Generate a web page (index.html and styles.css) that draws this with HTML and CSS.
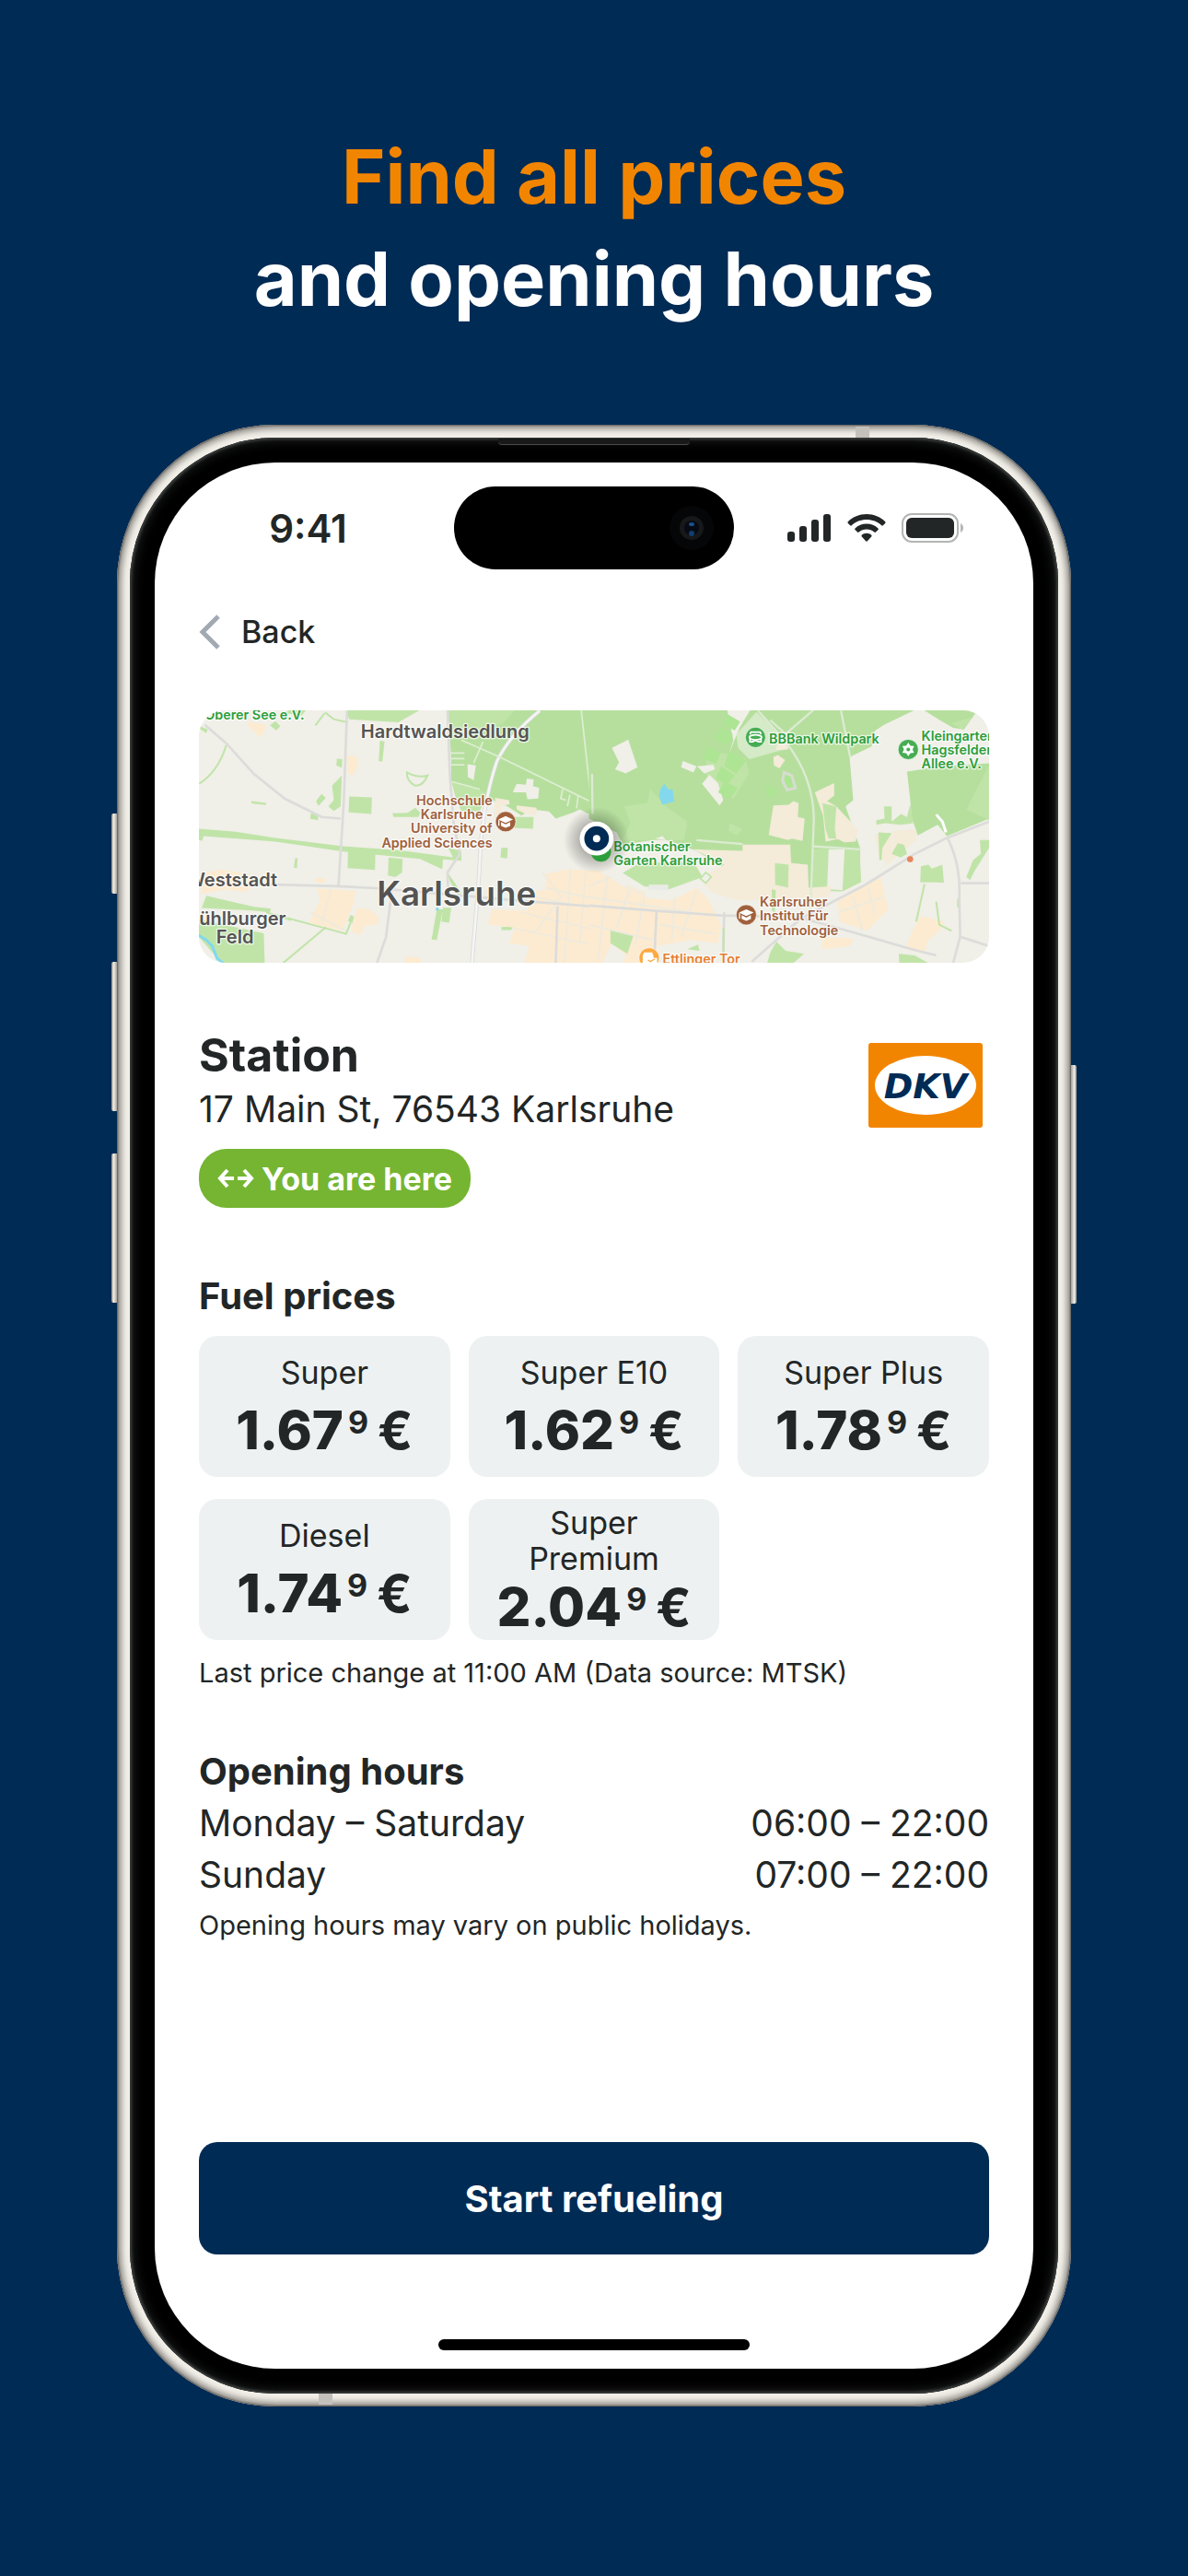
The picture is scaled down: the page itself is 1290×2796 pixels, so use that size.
FILE: index.html
```html
<!DOCTYPE html>
<html lang="en">
<head>
<meta charset="UTF-8">
<meta name="viewport" content="width=device-width, initial-scale=1.0">
<title>Find all prices and opening hours</title>
<link rel="stylesheet" href="styles.css">
</head>
<body>

<h1 class="headline">
    <span class="headline-accent">Find all prices</span>
    <span>and opening hours</span>
</h1>

<div class="phone">
    <span class="side-button action"></span>
    <span class="side-button volume-up"></span>
    <span class="side-button volume-down"></span>
    <span class="side-button power"></span>
    <span class="antenna antenna-top"></span>
    <span class="antenna antenna-bottom"></span>

    <div class="bezel">
        <span class="speaker"></span>
        <div class="screen">

            <header class="status-bar">
                <span class="time">9:41</span>
                <div class="island">
                    <svg class="camera" viewBox="0 0 48 48">
                        <circle cx="24" cy="24" r="24" fill="#050607"/>
                        <circle cx="24" cy="24" r="13" fill="#17181a"/>
                        <circle cx="24" cy="24" r="8" fill="#060a12"/>
                        <ellipse cx="24" cy="20" rx="3" ry="2" fill="#1d4f8c"/>
                        <circle cx="24" cy="30" r="3" fill="#123c70"/>
                    </svg>
                </div>
                <div class="status-icons">
                    <svg width="48" height="32" viewBox="0 0 48 32" fill="#222626">
                        <rect x="0" y="20" width="8" height="11" rx="3"/>
                        <rect x="13" y="14" width="8" height="17" rx="3"/>
                        <rect x="26" y="7" width="8" height="24" rx="3"/>
                        <rect x="39" y="1" width="8" height="30" rx="3"/>
                    </svg>
                    <svg width="42" height="32" viewBox="0 0 42 32" fill="#222626">
                        <path d="M21 1C13.200 1 6 4 .8 9.200c-.5.500-.5 1.200 0 1.700l2.400 2.400c.5.500 1.100.500 1.600 0C9.100 9.200 14.800 7 21 7s11.900 2.200 16.200 6.300c.5.500 1.100.500 1.600 0l2.400-2.400c.5-.5.500-1.200 0-1.700C36 4 28.800 1 21 1z"/>
                        <path d="M21 11.500c-4.800 0-9.200 1.800-12.500 4.900-.5.500-.5 1.200 0 1.700l2.500 2.500c.5.500 1.100.500 1.600 0 2.300-2 5.200-3.100 8.400-3.100s6.100 1.100 8.400 3.100c.5.500 1.100.500 1.600 0l2.500-2.500c.5-.5.500-1.200 0-1.700-3.300-3.100-7.700-4.900-12.500-4.900z"/>
                        <path d="M21 21.800c-2 0-3.800.7-5.200 1.900-.5.500-.5 1.200 0 1.700l4.300 4.900c.5.500 1.300.5 1.800 0l4.300-4.900c.5-.5.500-1.200 0-1.700-1.400-1.200-3.200-1.900-5.200-1.900z"/>
                    </svg>
                    <svg width="68" height="32" viewBox="0 0 68 32">
                        <rect x="1" y="1" width="60" height="30" rx="10" fill="none" stroke="#b3b5b4" stroke-width="2"/>
                        <rect x="5" y="5" width="52" height="22" rx="6" fill="#222626"/>
                        <path d="M64 11c2 1 3 3 3 5s-1 4-3 5z" fill="#b3b5b4"/>
                    </svg>
                </div>
            </header>

            <button class="back" type="button">
                <svg width="24" height="38" viewBox="0 0 24 38">
                    <path d="M21 2L4 19l17 17" fill="none" stroke="#a2a9b2" stroke-width="5"/>
                </svg>
                Back
            </button>

            <!-- map of the city around the station -->
            <svg class="map" viewBox="51 32 2571 823" preserveAspectRatio="xMidYMid slice" role="img" aria-label="Map of Karlsruhe">
                <defs>
                    <radialGradient id="pin-shadow">
                        <stop offset="0.4" stop-color="#000" stop-opacity=".3"/>
                        <stop offset="1" stop-color="#000" stop-opacity="0"/>
                    </radialGradient>
                </defs>
                <rect x="51" y="32" width="2571" height="823" fill="#f0efe8"/>

                <!-- west -->
                <g>
                    <g fill="#c0e4a8">
                        <path d="M530 32H770L700 72 540 62zM345 32H400L385 50 330 42zM55 85L80 95 75 107 52 92z"/>
                        <path d="M640 132L655 134 648 200 636 198zM300 68L316 85 302 98 282 82zM500 190L518 192 516 220 498 212z"/>
                        <path d="M484 278L516 245 512 345 490 360 472 345 490 325zM450 305L464 318 440 344 432 328zM415 368L440 370 438 390 413 386z"/>
                        <path d="M540 313L614 316 612 370 538 365zM222 328L270 334 268 341 222 336z"/>
                        <path d="M680 368L730 366 755 350 772 366 765 380 685 380z"/>
                        <path d="M51 418L170 428 300 448 520 475 700 488 905 515 905 522 845 518 843 550 770 516 520 492 300 460 66 442 62 458 51 455z"/>
                        <path d="M536 488L625 495 624 552 535 546zM668 512L714 516 712 560 690 575 666 570zM364 514L372 514 370 546 360 545z"/>
                        <path d="M1035 480L1056 480 1054 515 1032 512zM1060 380L1140 380 1138 418 1065 415z"/>
                        <path d="M75 636L230 672 285 678 282 690 225 684 60 676z"/>
                        <path d="M51 712L130 730 262 758 265 855 125 855 51 770z"/>
                        <path d="M825 680L845 680 825 780 808 778zM845 675L872 675 865 724 840 720zM860 560L905 625 895 635 868 590z"/>
                        <path d="M545 698L556 704 550 725 536 718zM1165 725L1215 728 1214 742 1165 740zM1035 738L1080 735 1065 748 1036 748zM1290 822L1316 830 1296 855 1275 855z"/>
                    </g>
                    <path d="M140 146Q115 230 52 272M460 42L430 82M462 40L490 62 535 72M495 625L462 740 325 855M300 698L475 745 530 760 545 722M270 690L350 715" fill="none" stroke="#c0e4a8" stroke-width="6"/>
                    <path d="M728 235Q765 255 795 245 780 280 755 278 725 262 728 235z" fill="none" stroke="#c0e4a8" stroke-width="6"/>
                    <path d="M862 32H1360V390L1290 355 1270 365 1212 385 1190 362 1135 355 1100 375 1055 345 1015 330 985 315 965 360 905 360 885 310 872 260 872 190z" fill="#b6df9e"/>
                    <path d="M862 32H1080L1040 75 905 125 870 120zM872 265L985 300 965 360 905 360zM862 480L905 490 905 520 880 515z" fill="#c0e4a8"/>
                    <g fill="#f0efe8">
                        <path d="M925 208L952 212 945 260 926 250zM1085 272L1115 275 1118 255 1140 258 1138 280 1158 285 1155 320 1120 322 1115 300 1072 300z"/>
                    </g>
                    <path d="M1015 318L1060 325 1062 338 1035 345 1035 368 1012 390zM1085 342L1150 350 1148 376 1110 368 1085 355z" fill="#f4ebd9"/>
                    <g fill="#fcebd1">
                        <path d="M205 68L270 80 265 100 250 122 215 88zM532 180L570 185 568 215 552 245 535 240z"/>
                        <path d="M60 565L120 550 210 565 245 590 200 625 140 615 60 630zM435 612L560 620 555 660 540 695 520 750 410 725 425 690 445 650zM565 675L605 680 635 705 635 728 590 735 575 765 545 750zM430 578L462 580 460 595 428 592z"/>
                        <path d="M1180 565L1250 550 1360 555V855H1110L1125 800 1060 790 1080 740 990 730 1005 680 1120 685 1130 625 1180 615zM725 832L775 838 775 855H720z"/>
                    </g>
                    <path d="M1180 610L1350 650M1140 640L1350 680M1100 690L1350 750M1070 740L1350 800M1260 550L1240 855M1310 555L1290 790M1170 560L1230 640 1140 760M480 615L450 730M415 690L530 750" fill="none" stroke="#eeeade" stroke-width="5"/>
                    <g fill="none" stroke="#dcdcda" stroke-width="8">
                        <path d="M70 80L140 140 230 240 330 320 450 380 512 385"/>
                        <path d="M533 32L522 340 505 605"/>
                        <path d="M240 598L500 605 640 612 900 635 1130 655 1350 672"/>
                        <path d="M680 610L660 770 630 855M860 32L868 250 880 400 900 500 860 560 862 620M1218 670L1212 855"/>
                    </g>
                    <path d="M1160 34Q1060 115 1020 200C990 290 970 400 965 520 960 640 945 760 940 855" fill="none" stroke="#d9dadb" stroke-width="13"/>
                    <path d="M1160 34Q1060 115 1020 200C990 290 970 400 965 520 960 640 945 760 940 855" fill="none" stroke="#f5f5f4" stroke-width="8"/>
                    <path d="M905 130L1030 185 1325 330M1295 32L1332 370M875 265L965 290M975 135L945 205M868 172H915M870 190H915M872 210H915M1235 290L1228 320 1245 325M1258 308L1250 345M1285 310L1280 352" fill="none" stroke="#dfeed3" stroke-width="5"/>
                    <path d="M51 765L75 780 95 800 110 840 130 855" fill="none" stroke="#80d9ee" stroke-width="9"/>
                    <rect x="822" y="675" width="9" height="9" fill="#80d9ee"/>
                    <path d="M51 810L100 855H51z" fill="#a9a9a5"/>
                </g>

                <!-- east -->
                <g transform="translate(1320 0)">
                    <path d="M0 32H1060L960 80 930 100 920 150 848 185 860 325 835 345 882 480 884 590 825 620 725 620 500 575 430 540 350 490 240 450 110 470 90 430 0 385z" fill="#b6df9e"/>
                    <path d="M115 345L190 335 200 290 250 345 320 395 310 455 110 455 135 400zM458 400L500 420 480 440 455 425zM385 160L510 190 520 240 470 320 420 300 380 240z" fill="#c0e4a8"/>
                    <path d="M110 562L165 530 340 525 370 575 260 615 180 605zM605 530L650 535 648 610 606 600zM735 485L780 485 775 610 725 622zM835 485L880 490 885 590 825 620z" fill="#c0e4a8"/>
                    <path d="M730 485H880L885 592 825 622 720 620zM430 540L500 545 500 575z" fill="#c0e4a8"/>
                    <path d="M780 485L832 485 825 618 775 614z" fill="#f0efe8"/>
                    <path d="M1035 232L1150 215 1302 205V385L1165 442 1135 405 1070 440 1050 380 1045 320zM1090 32H1265L1220 95 1185 90 1120 52z" fill="#b6df9e"/>
                    <path d="M1302 212L1228 355 1302 390zM1180 75L1250 55 1215 95z" fill="#c0e4a8"/>
                    <g fill="#f0efe8">
                        <path d="M75 155L128 128 158 218 120 238 85 225 98 202zM305 198L350 215 340 235 300 218zM352 215L405 210 410 225 375 238zM392 243L420 270 437 325 425 342 368 272zM450 32H525L490 90 455 175 470 130z"/>
                        <path d="M215 450L240 442 250 455z"/>
                    </g>
                    <path d="M545 38L640 130 655 155 600 170 522 192 485 155 480 110z" fill="#d5eac6"/>
                    <g fill="#aee594">
                        <path d="M450 45L492 70 475 98 435 80zM428 88L468 110 455 145 412 130zM385 150L430 170 415 205 370 190zM455 165L512 195 480 240 440 215zM430 215L475 245 450 275 412 255zM440 265L485 285 460 320 420 300zM580 272L612 292 600 322 575 305z"/>
                    </g>
                    <path d="M232 290L245 272 258 290 272 290 278 330 238 340 228 310z" fill="#83d8ed"/>
                    <g fill="#f4ebd9">
                        <path d="M600 185L615 178 638 195 620 222 602 212zM612 145L645 142 648 160 608 162zM600 342L650 340 665 328 682 335 680 380 702 385 695 458 660 450 648 455 585 438z"/>
                        <path d="M735 300L798 270 798 310 775 328 805 345 875 420 868 460 830 462 810 452 770 460 762 375z"/>
                        <path d="M340 485L500 490 500 470 655 470 658 530 712 535 715 610 790 605 780 640 555 650 480 650 400 625 360 580 440 535z"/>
                        <path d="M988 425L1065 420 1065 455 1010 500 965 540 960 500 988 495zM930 435H985V515L945 520zM120 600L185 625 178 645 110 625z"/>
                    </g>
                    <path d="M760 335L805 345 800 420 805 450 780 450 770 420zM605 530L650 535 648 610 606 600zM942 430L985 432 955 480 952 520 945 520zM960 345L985 345 985 395 1015 370 1035 380 1045 340 1055 400 1015 405 965 400 935 405 935 390 962 385zM1005 465L1025 470 1035 500 1015 512 985 500z" fill="#c0e4a8"/>
                    <path d="M1080 540L1105 535 1115 548 1150 535 1155 593 1078 592zM1272 455L1302 455V480L1255 555 1240 585 1228 575 1250 520 1275 500zM1198 645L1208 645V680L1198 672z" fill="#c0e4a8"/>
                    <path d="M75 740L145 760 125 820 80 790 50 840 45 830zM610 785L640 815 700 825 665 855H580L590 820zM1008 825L1060 830 1105 855H1010zM320 810L355 795 360 815zM595 615L608 618 605 690 595 685z" fill="#c0e4a8"/>
                    <path d="M195 600H258V618H195z" fill="#e9ebe6"/>
                    <path d="M380 560L398 575 380 595 363 580z" fill="#f0efe8" stroke="#c0e4a8" stroke-width="5"/>
                    <g fill="#fcebd1">
                        <path d="M0 555L60 570 130 620 200 645 270 650 350 610 390 650 410 690 430 735 420 790 330 780 220 800 210 855H0z"/>
                        <path d="M810 655L950 575 960 625 975 680 905 750 815 720zM1080 702L1155 720 1145 745 1100 785 1095 825 1030 810 1050 755zM755 770L860 775 850 800 760 810z"/>
                    </g>
                    <path d="M50 840L75 790 120 830 110 855H50z" fill="#f0efe8"/>
                    <path d="M70 745L145 765 125 825 70 790z" fill="#c0e4a8"/>
                    <path d="M0 605L70 575M0 640L400 700M0 730L210 780M60 570L30 850M130 620L90 740M180 640L150 800M280 640L270 780M350 620L300 770M230 730L410 760M810 690L960 640M860 640L890 750M910 610L930 700" fill="none" stroke="#eeeade" stroke-width="6"/>
                    <path d="M635 235L660 245 672 285 645 292 630 262z" fill="#aee594" stroke="#d8dcd0" stroke-width="9"/>
                    <path d="M550 34L640 135Q730 250 732 385L720 690M820 34L850 185M590 65L640 110 730 32M10 240L12 370M725 475L885 485M350 455L500 468" fill="none" stroke="#dcebd2" stroke-width="7"/>
                    <g fill="none" stroke="#dcdcda" stroke-width="8">
                        <path d="M0 668L220 685 430 700 680 705 860 755 1050 810 1130 830"/>
                        <path d="M530 850L690 710 900 600 1060 500 1160 450 1302 395"/>
                        <path d="M1165 445Q1210 530 1205 640L1208 770 1185 855M1210 595H1302M1210 770L1302 800M220 685L212 855M440 690L436 855"/>
                    </g>
                    <path d="M1092 598L1065 720M1130 655L1140 730 1180 750M438 740V820" fill="none" stroke="#c0e4a8" stroke-width="6"/>
                    <path d="M1130 372L1150 395 1162 430" fill="none" stroke="#fff" stroke-width="9"/>
                    <circle cx="1045" cy="517" r="10" fill="#e8845a"/>
                </g>

                <!-- place names -->
                <g class="map-label place">
                    <text x="578" y="122">Hardtwaldsiedlung</text>
                    <text x="306" y="606" text-anchor="end">Weststadt</text>
                    <text x="334" y="732" text-anchor="end">Mühlburger</text>
                    <text x="168" y="792" text-anchor="middle">Feld</text>
                    <text class="city" x="630" y="668">Karlsruhe</text>
                </g>
                <g class="map-label school">
                    <text x="1006" y="342" text-anchor="end">Hochschule</text>
                    <text x="1006" y="388" text-anchor="end">Karlsruhe -</text>
                    <text x="1006" y="433" text-anchor="end">University of</text>
                    <text x="1006" y="479" text-anchor="end">Applied Sciences</text>
                    <text x="1876" y="672">Karlsruher</text>
                    <text x="1876" y="717">Institut Für</text>
                    <text x="1876" y="763">Technologie</text>
                </g>
                <g class="map-label park">
                    <text x="394" y="62" text-anchor="end">Oberer See e.V.</text>
                    <text x="1400" y="490">Botanischer</text>
                    <text x="1400" y="535">Garten Karlsruhe</text>
                    <text x="1906" y="140">BBBank Wildpark</text>
                    <text x="2402" y="132">Kleingarten</text>
                    <text x="2402" y="177">Hagsfelder</text>
                    <text x="2402" y="223">Allee e.V.</text>
                </g>
                <g class="map-label shop">
                    <text x="1560" y="858">Ettlinger Tor</text>
                </g>

                <!-- points of interest -->
                <g stroke="#fff" stroke-opacity=".6" stroke-width="3">
                    <circle cx="1049" cy="395" r="33" fill="#a0603c"/>
                    <circle cx="1832" cy="698" r="33" fill="#a0603c"/>
                    <circle cx="1862" cy="121" r="33" fill="#46ad52"/>
                    <circle cx="2359" cy="160" r="33" fill="#46ad52"/>
                    <circle cx="1516" cy="838" r="33" fill="#fbaa42"/>
                </g>
                <g fill="#fff">
                    <path d="M1025 388L1049 377 1073 388 1049 399zM1034 396L1049 404 1064 396V409L1049 415 1034 409zM1025 390H1029V408H1025z"/>
                    <path d="M1808 691L1832 680 1856 691 1832 702zM1817 699L1832 707 1847 699V712L1832 718 1817 712zM1808 693H1812V711H1808z"/>
                    <path d="M2359 138L2366 148 2378 149 2373 160 2378 171 2366 172 2359 182 2352 172 2340 171 2345 160 2340 149 2352 148z"/>
                    <path d="M1495 850V830L1500 820H1526L1530 832V838H1542V855H1495z"/>
                </g>
                <circle cx="2359" cy="160" r="6" fill="#46ad52"/>
                <g fill="none" stroke="#fff" stroke-width="5">
                    <path d="M1845 104H1879M1845 104V111M1879 104V111"/>
                    <ellipse cx="1862" cy="121" rx="20" ry="8"/>
                    <path d="M1844 126V135H1852L1862 131 1872 135H1880V126"/>
                </g>
                <path d="M1512 845L1520 850 1534 842" fill="none" stroke="#fbaa42" stroke-width="4"/>

                <circle cx="1345" cy="455" r="108" fill="url(#pin-shadow)"/>
                <circle cx="1359" cy="492" r="33" fill="#2d9e3b"/>
                <circle cx="1345" cy="450" r="55" fill="#fff"/>
                <circle cx="1345" cy="450" r="40" fill="#002b55"/>
                <circle cx="1345" cy="450" r="12" fill="#fff"/>
            </svg>

            <section class="station">
                <div class="station-info">
                    <h2 class="station-name">Station</h2>
                    <p class="address">17 Main St, 76543 Karlsruhe</p>
                    <span class="badge">
                        <svg width="40" height="22" viewBox="0 0 40 22" fill="none" stroke="#fff" stroke-width="4">
                            <path d="M11 2L3 11l8 9M3 11h15M29 2l8 9-8 9M37 11H22"/>
                        </svg>
                        You are here
                    </span>
                </div>
                <svg class="brand" width="124" height="92" viewBox="0 0 124 92" role="img" aria-label="DKV">
                    <rect width="124" height="92" rx="3" fill="#f28500"/>
                    <ellipse cx="62" cy="46" rx="55" ry="32" fill="#fff"/>
                    <text class="brand-text" x="62" y="60" text-anchor="middle">DKV</text>
                </svg>
            </section>

            <section class="prices">
                <h3 class="section-title">Fuel prices</h3>
                <div class="price-grid">
                    <div class="price-card">
                        <span class="fuel">Super</span>
                        <span class="price">1.67<sup>9</sup><span class="currency">€</span></span>
                    </div>
                    <div class="price-card">
                        <span class="fuel">Super E10</span>
                        <span class="price">1.62<sup>9</sup><span class="currency">€</span></span>
                    </div>
                    <div class="price-card">
                        <span class="fuel">Super Plus</span>
                        <span class="price">1.78<sup>9</sup><span class="currency">€</span></span>
                    </div>
                    <div class="price-card">
                        <span class="fuel">Diesel</span>
                        <span class="price">1.74<sup>9</sup><span class="currency">€</span></span>
                    </div>
                    <div class="price-card two-line">
                        <span class="fuel">Super<br>Premium</span>
                        <span class="price">2.04<sup>9</sup><span class="currency">€</span></span>
                    </div>
                </div>
                <p class="note">Last price change at 11:00 AM (Data source: MTSK)</p>
            </section>

            <section class="hours">
                <h3 class="section-title">Opening hours</h3>
                <table class="hours-table">
                    <tr>
                        <th scope="row">Monday – Saturday</th>
                        <td>06:00 – 22:00</td>
                    </tr>
                    <tr>
                        <th scope="row">Sunday</th>
                        <td>07:00 – 22:00</td>
                    </tr>
                </table>
                <p class="note">Opening hours may vary on public holidays.</p>
            </section>

            <button class="start" type="button">Start refueling</button>
            <span class="home-bar"></span>
        </div>
    </div>
</div>

</body>
</html>
```
FILE: styles.css
```css
* {
    box-sizing: border-box;
}

body {
    margin: 0;
    min-height: 100vh;
    padding: 137px 127px 80px;
    background-color: #002b55;
    color: #222626;
    font-family: Inter, 'Liberation Sans', sans-serif;
}

h1, h2, h3, p {
    margin: 0;
}

button {
    border: none;
    font-family: inherit;
    cursor: pointer;
}

.headline {
    display: flex;
    flex-direction: column;
    align-items: center;
    margin-bottom: 102px;
    color: #fff;
    font-size: 81px;
    font-weight: 700;
    line-height: 111px;
    white-space: nowrap;
}

.headline-accent {
    color: #f28500;
}

/* phone frame */

.phone {
    position: relative;
    padding: 14px;
    border-radius: 172px;
    background-color: #f1efe8;
    box-shadow: inset 0 0 2px 1px #5c5a56, inset 0 0 6px 5px #989590;
}

.side-button {
    position: absolute;
    left: -6px;
    width: 6px;
    border-radius: 2px 0 0 2px;
    background: linear-gradient(to right, #8d8b86, #f1efe8 40%, #a5a29c);
}

.action {
    top: 422px;
    height: 87px;
}

.volume-up {
    top: 583px;
    height: 162px;
}

.volume-down {
    top: 791px;
    height: 162px;
}

.power {
    top: 695px;
    left: auto;
    right: -6px;
    height: 259px;
    border-radius: 0 2px 2px 0;
    background: linear-gradient(to left, #8d8b86, #f1efe8 40%, #a5a29c);
}

.antenna {
    position: absolute;
    width: 15px;
    height: 12px;
    background-color: #c3c1bb;
}

.antenna-top {
    top: 2px;
    right: 219px;
}

.antenna-bottom {
    bottom: 2px;
    left: 219px;
}

.bezel {
    position: relative;
    padding: 27px;
    border-radius: 158px;
    background-color: #000;
    box-shadow: inset 0 0 3px 2px #3d4140, inset 0 0 12px 4px #1c1d1d;
}

.speaker {
    position: absolute;
    top: 1px;
    left: 50%;
    width: 208px;
    height: 7px;
    margin-left: -104px;
    border-bottom: 1px solid #4a4a4a;
    border-radius: 0 0 4px 4px;
    background-color: #191919;
}

.screen {
    display: flex;
    flex-direction: column;
    padding: 26px 48px 20px;
    border-radius: 131px;
    background-color: #fff;
}

.status-bar {
    display: grid;
    grid-template-columns: 1fr 304px 1fr;
    align-items: center;
    margin-bottom: 44px;
}

.time {
    padding-right: 40px;
    font-size: 42px;
    font-weight: 600;
    text-align: center;
}

.island {
    display: flex;
    align-items: center;
    justify-content: flex-end;
    height: 90px;
    padding-right: 22px;
    border-radius: 45px;
    background-color: #000;
}

.camera {
    width: 48px;
    height: 48px;
}

.status-icons {
    display: flex;
    justify-content: flex-end;
    gap: 17px;
    padding-right: 27px;
}

.back {
    display: flex;
    align-items: center;
    align-self: flex-start;
    gap: 22px;
    margin-bottom: 61px;
    padding: 0;
    background: none;
    color: inherit;
    font-size: 34px;
    font-weight: 500;
    line-height: 48px;
}

.map {
    display: block;
    width: 100%;
    height: 274px;
    border-radius: 28px;
}

.map-label {
    font-weight: 600;
    paint-order: stroke;
    stroke: #fff;
    stroke-opacity: 0.7;
    stroke-width: 8px;
    stroke-linejoin: round;
}

.place {
    fill: #545454;
    font-size: 60px;
}

.city {
    font-size: 110px;
}

.school {
    fill: #a0603c;
    font-size: 43px;
}

.park {
    fill: #2d9e3b;
    font-size: 43px;
}

.shop {
    fill: #e87f2f;
    font-size: 43px;
}

/* station */

.station {
    display: flex;
    justify-content: space-between;
    margin-top: 70px;
}

.station-name {
    font-size: 50px;
    font-weight: 700;
    line-height: 60px;
}

.address {
    margin-bottom: 14px;
    font-size: 39px;
    line-height: 58px;
}

.badge {
    display: inline-flex;
    align-items: center;
    gap: 8px;
    height: 64px;
    padding: 0 20px;
    border-radius: 30px;
    background-color: #75b532;
    color: #fff;
    font-size: 34px;
    font-weight: 700;
}

.brand {
    margin: 17px 7px 0 0;
}

.brand-text {
    fill: #002b55;
    font-family: 'DejaVu Sans', sans-serif;
    font-size: 38px;
    font-style: italic;
    font-weight: 700;
}

/* prices */

.prices {
    margin-top: 68px;
}

.section-title {
    font-size: 40px;
    font-weight: 700;
    line-height: 56px;
}

.price-grid {
    display: grid;
    grid-template-columns: repeat(3, 1fr);
    gap: 24px 20px;
    margin: 15px 0 16px;
}

.price-card {
    display: flex;
    flex-direction: column;
    align-items: center;
    justify-content: center;
    gap: 13px;
    height: 153px;
    border-radius: 20px;
    background-color: #edf1f2;
    text-align: center;
}

.two-line {
    gap: 3px;
}

.fuel {
    font-size: 34px;
    line-height: 39px;
}

.price {
    font-size: 58px;
    font-weight: 800;
    line-height: 60px;
}

.price sup {
    margin: 0 10px 0 5px;
    font-size: 34px;
    font-weight: 700;
    line-height: 0;
    vertical-align: 17px;
}

.currency {
    font-size: 56px;
    font-weight: 700;
}

.note {
    font-size: 29px;
    line-height: 40px;
}

/* opening hours */

.hours {
    margin-top: 59px;
}

.hours-table {
    width: 100%;
    margin-bottom: 7px;
    border-collapse: collapse;
    font-size: 39px;
    line-height: 56px;
}

.hours-table th {
    padding: 0;
    font-weight: 400;
    text-align: left;
}

.hours-table td {
    padding: 0;
    text-align: right;
}

.start {
    height: 122px;
    margin: 215px 0 92px;
    border-radius: 20px;
    background-color: #002b55;
    color: #fff;
    font-size: 40px;
    font-weight: 700;
}

.home-bar {
    align-self: center;
    width: 338px;
    height: 12px;
    border-radius: 6px;
    background-color: #000;
}
```
